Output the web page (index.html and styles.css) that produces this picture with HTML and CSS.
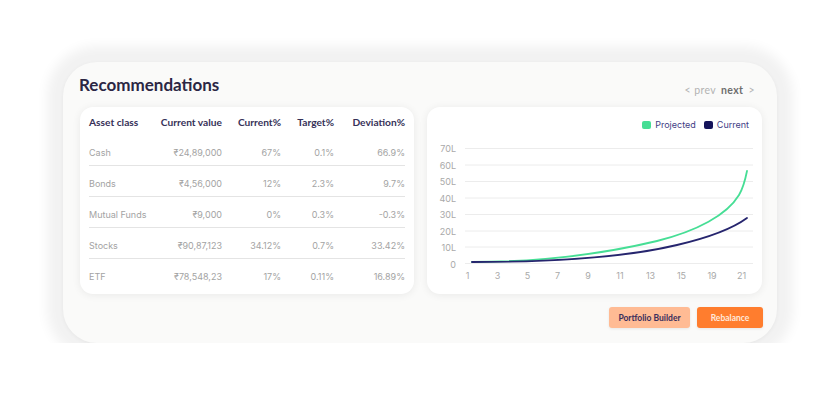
FILE: index.html
```html
<!DOCTYPE html>
<html>
<head>
<meta charset="utf-8">
<link rel="stylesheet" href="styles.css">
</head>
<body>
<div class="stage">
  <section class="card">
    <header class="card-head">
      <h1 class="title">Recommendations</h1>
      <nav class="pager"><span class="muted">&lt; prev</span> <span class="strong">next</span> <span class="muted">&gt;</span></nav>
    </header>
    <div class="panels">
      <div class="panel table-panel">
        <table class="alloc">
          <colgroup>
            <col class="c1"><col class="c2"><col class="c3"><col class="c4"><col class="c5">
          </colgroup>
          <thead>
            <tr><th class="l">Asset class</th><th>Current value</th><th>Current%</th><th>Target%</th><th>Deviation%</th></tr>
          </thead>
          <tbody>
            <tr><td class="l">Cash</td><td>₹24,89,000</td><td>67%</td><td>0.1%</td><td>66.9%</td></tr>
            <tr><td class="l">Bonds</td><td>₹4,56,000</td><td>12%</td><td>2.3%</td><td>9.7%</td></tr>
            <tr><td class="l">Mutual Funds</td><td>₹9,000</td><td>0%</td><td>0.3%</td><td>-0.3%</td></tr>
            <tr><td class="l">Stocks</td><td>₹90,87,123</td><td>34.12%</td><td>0.7%</td><td>33.42%</td></tr>
            <tr><td class="l">ETF</td><td>₹78,548,23</td><td>17%</td><td>0.11%</td><td>16.89%</td></tr>
          </tbody>
        </table>
      </div>
      <div class="panel chart-panel">
        <div class="legend">
          <span class="key"><i class="sw green"></i>Projected</span>
          <span class="key"><i class="sw navy"></i>Current</span>
        </div>
        <svg class="chart" width="335" height="187" viewBox="0 0 335 187">
          <g class="grid" stroke="#ececec" stroke-width="1">
            <line x1="38" x2="326" y1="41.5" y2="41.5"/>
            <line x1="38" x2="326" y1="58" y2="58"/>
            <line x1="38" x2="326" y1="74.5" y2="74.5"/>
            <line x1="38" x2="326" y1="91" y2="91"/>
            <line x1="38" x2="326" y1="107.5" y2="107.5"/>
            <line x1="38" x2="326" y1="124" y2="124"/>
            <line x1="38" x2="326" y1="140" y2="140"/>
            <line x1="38" x2="326" y1="156.5" y2="156.5"/>
          </g>
          <g class="ylab" text-anchor="end">
            <text x="29" y="45">70L</text>
            <text x="29" y="61.5">60L</text>
            <text x="29" y="78">50L</text>
            <text x="29" y="94.5">40L</text>
            <text x="29" y="111">30L</text>
            <text x="29" y="127.5">20L</text>
            <text x="29" y="143.5">10L</text>
            <text x="29" y="160.5">0</text>
          </g>
          <g class="xlab" text-anchor="middle">
            <text x="40.5" y="172">1</text>
            <text x="70.5" y="172">3</text>
            <text x="100.5" y="172">5</text>
            <text x="130.5" y="172">7</text>
            <text x="161" y="172">9</text>
            <text x="193" y="172">11</text>
            <text x="223.5" y="172">13</text>
            <text x="254.5" y="172">15</text>
            <text x="285" y="172">19</text>
            <text x="314.5" y="172">21</text>
          </g>
          <path fill="none" stroke="#46de95" stroke-width="1.8" stroke-linecap="round"
            d="M45,155 C120,155 180,146 230,134 C270,124 300,108 312,88 C315,83 318,74 320,64"/>
          <path fill="none" stroke="#26256e" stroke-width="1.8" stroke-linecap="round"
            d="M45,155 C130,155 200,150 250,138 C280,131 305,122 320,111"/>
        </svg>
      </div>
    </div>
    <footer class="actions">
      <button class="btn btn-soft">Portfolio Builder</button>
      <button class="btn btn-primary">Rebalance</button>
    </footer>
  </section>
</div>
</body>
</html>
```

FILE: styles.css
```css
* { box-sizing: border-box; }
html, body { margin: 0; padding: 0; background: #ffffff; }
body { font-family: "Inter", "Lato", sans-serif; }

.stage {
  padding: 62px 63px 0 63px;
}

.card {
  width: 714px;
  height: 281px;
  background: #fafaf9;
  border-radius: 34px;
  padding: 12px 15px 15px 17px;
  display: flex;
  flex-direction: column;
  box-shadow: 0 1px 4px rgba(0,0,0,0.05), 0 0 12px 16px #f2f2f2;
}

.card-head {
  height: 28px;
  display: flex;
  justify-content: space-between;
  align-items: flex-start;
  margin-bottom: 5px;
}
.title {
  margin: 0 0 0 -1px;
  font-family: "Lato", sans-serif;
  font-weight: 700;
  font-size: 17px;
  line-height: 22px;
  color: #2b2644;
  letter-spacing: 0;
}
.pager {
  margin-top: 9px;
  margin-right: 7px;
  font-family: "Lato", sans-serif;
  font-size: 10.5px;
  line-height: 14px;
  letter-spacing: 0.4px;
}
.pager .muted { color: #b3b3b3; }
.pager .strong { color: #6e6e6e; font-weight: 700; margin-left: 2px; margin-right: 2px; }

.panels {
  display: flex;
  gap: 13px;
  height: 187px;
}
.panel {
  background: #ffffff;
  border-radius: 13px;
  box-shadow: 0 1px 8px rgba(0,0,0,0.07);
}
.table-panel {
  width: 334px;
  padding: 0 9px 6px 9px;
}
.chart-panel {
  width: 335px;
  position: relative;
}

.alloc {
  width: 316px;
  border-collapse: collapse;
  table-layout: fixed;
}
.alloc col.c1 { width: 61px; }
.alloc col.c2 { width: 72px; }
.alloc col.c3 { width: 59px; }
.alloc col.c4 { width: 53px; }
.alloc col.c5 { width: 71px; }
.alloc th, .alloc td {
  text-align: right;
  white-space: nowrap;
  padding: 0;
}
.alloc .l { text-align: left; }
.alloc th {
  font-family: "Lato", sans-serif;
  font-weight: 700;
  font-size: 10.2px;
  line-height: 12px;
  color: #363158;
  padding-top: 9px;
  padding-bottom: 7px;
}
.alloc td {
  font-family: "Inter", sans-serif;
  font-size: 9px;
  line-height: 12px;
  color: #a3a3a3;
  padding-top: 12px;
  padding-bottom: 6px;
}
.alloc tbody tr { border-bottom: 1px solid #e4e4e4; }
.alloc tbody tr:last-child { border-bottom: none; }

.legend {
  position: absolute;
  top: 12px;
  right: 13px;
  display: flex;
  gap: 8px;
  font-family: "Inter", sans-serif;
  font-size: 9px;
  line-height: 12px;
  color: #3f3d85;
}
.key { display: flex; align-items: center; gap: 4px; }
.sw { display: inline-block; width: 9px; height: 8px; border-radius: 2px; }
.sw.green { background: #46de95; }
.sw.navy { background: #15145a; }

.chart { display: block; }
.chart text {
  font-family: "Inter", sans-serif;
  font-size: 9px;
  fill: #a9a9a9;
}

.actions {
  margin-top: 13px;
  display: flex;
  justify-content: flex-end;
  gap: 7px;
  margin-right: -1px;
}
.btn {
  height: 21px;
  border: none;
  border-radius: 3px;
  font-family: "Lato", sans-serif;
  font-weight: 700;
  font-size: 8.5px;
  padding: 0;
  box-shadow: 0 1px 3px rgba(0,0,0,0.08);
}
.btn-soft { width: 81px; background: #ffbb94; color: #3a2e5c; }
.btn-primary { width: 66px; background: #ff7d2e; color: #ffe9dc; }
```
